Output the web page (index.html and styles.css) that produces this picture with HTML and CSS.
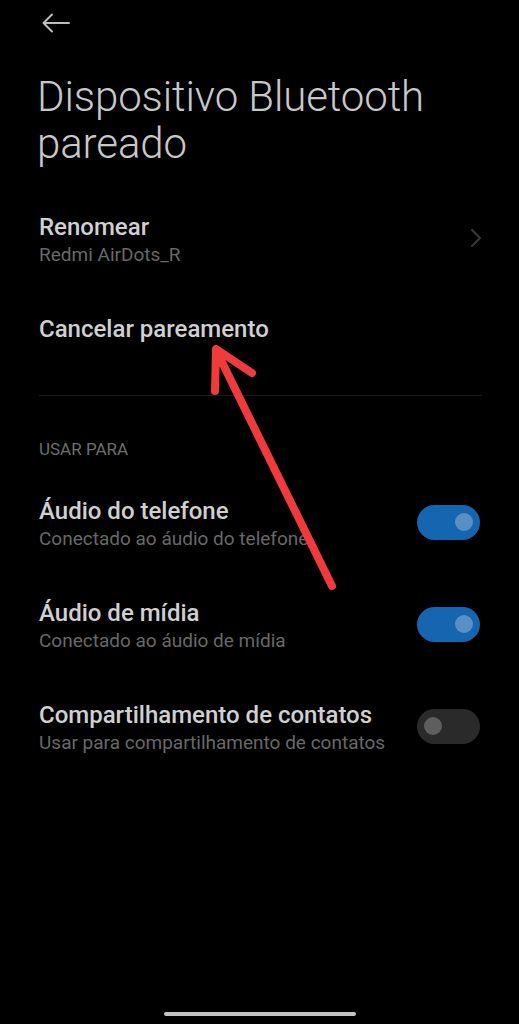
FILE: index.html
```html
<!DOCTYPE html>
<html lang="pt-BR">
<head>
    <meta charset="UTF-8">
    <meta name="viewport" content="width=device-width, initial-scale=1.0">
    <title>Dispositivo Bluetooth pareado</title>
    <link rel="stylesheet" href="styles.css">
</head>
<body>
    <div class="screen">
        <div class="topbar">
            <svg class="back" width="30" height="22" viewBox="0 0 30 22">
                <path d="M28 11H3M11 2.5L2.5 11L11 19.5" fill="none" stroke="#bdbdbd" stroke-width="2" stroke-linecap="round" stroke-linejoin="round"/>
            </svg>
        </div>

        <h1 class="title">Dispositivo Bluetooth pareado</h1>

        <div class="item item-link">
            <div class="item-text">
                <div class="item-title">Renomear</div>
                <div class="item-sub">Redmi AirDots_R</div>
            </div>
            <svg class="chevron" width="12" height="20" viewBox="0 0 12 20">
                <path d="M2 2L10 10L2 18" fill="none" stroke="#3a3a3a" stroke-width="2" stroke-linecap="round" stroke-linejoin="round"/>
            </svg>
        </div>

        <div class="item item-single">
            <div class="item-title">Cancelar pareamento</div>
        </div>

        <div class="divider"></div>

        <div class="section-label">USAR PARA</div>

        <div class="item item-toggle">
            <div class="item-text">
                <div class="item-title">Áudio do telefone</div>
                <div class="item-sub">Conectado ao áudio do telefone</div>
            </div>
            <div class="switch on"><span class="knob"></span></div>
        </div>

        <div class="item item-toggle">
            <div class="item-text">
                <div class="item-title">Áudio de mídia</div>
                <div class="item-sub">Conectado ao áudio de mídia</div>
            </div>
            <div class="switch on"><span class="knob"></span></div>
        </div>

        <div class="item item-toggle">
            <div class="item-text">
                <div class="item-title">Compartilhamento de contatos</div>
                <div class="item-sub">Usar para compartilhamento de contatos</div>
            </div>
            <div class="switch"><span class="knob"></span></div>
        </div>

        <div class="home-bar"></div>
    </div>

    <!-- red annotation arrow drawn over the screenshot -->
    <svg class="annotation" viewBox="0 0 519 1024" width="519" height="1024">
        <path d="M332 586L216 350M252 373L216 349L215 391" fill="none" stroke="#f03b3d" stroke-width="8" stroke-linecap="round" stroke-linejoin="round"/>
    </svg>
</body>
</html>
```

FILE: styles.css
```css
body {
    margin: 0;
    padding: 0;
    background-color: #000;
    font-family: Roboto, "Noto Sans", sans-serif;
    color: #cfcfcf;
}

.screen {
    position: relative;
    min-height: 1024px;
    box-sizing: border-box;
    padding: 0 39px;
    display: flex;
    flex-direction: column;
}

.topbar {
    height: 46px;
    display: flex;
    align-items: flex-start;
}

.back {
    margin-top: 12px;
    margin-left: 2px;
}

.title {
    margin: 27px 0 0 -2px;
    font-size: 42px;
    line-height: 47px;
    font-weight: 300;
    color: #c8c8c8;
    letter-spacing: -0.1px;
}

.item {
    display: flex;
    align-items: center;
    justify-content: space-between;
}

.item-title {
    font-size: 24px;
    line-height: 30px;
    font-weight: 500;
    color: #d0d0d0;
}

.item-sub {
    font-size: 19px;
    line-height: 26px;
    color: #686868;
}

.item-link {
    padding: 14px 0;
    margin-top: 31px;
}

.chevron {
    margin-right: -2px;
    margin-top: -4px;
}

.item-single {
    padding: 32px 0 51px;
}

.divider {
    height: 1px;
    background-color: #1a1a1a;
    margin-right: -2px;
}

.section-label {
    margin-top: 43px;
    font-size: 17px;
    line-height: 20px;
    color: #6e6e6e;
}

.item-toggle {
    padding: 22px 0 24px;
}

.section-label + .item-toggle {
    margin-top: 15px;
}

.switch {
    width: 63px;
    height: 35px;
    border-radius: 18px;
    background-color: #2a2a2a;
    display: flex;
    align-items: center;
    padding: 0 7px;
    box-sizing: border-box;
    margin-top: -4px;
    flex-shrink: 0;
}

.switch.on {
    background-color: #1565b0;
    justify-content: flex-end;
}

.knob {
    width: 18px;
    height: 18px;
    border-radius: 50%;
    background-color: #5e5e5e;
}

.switch.on .knob {
    background-color: #5a8fc2;
}

.home-bar {
    margin-top: auto;
    margin-bottom: 8px;
    align-self: center;
    width: 192px;
    height: 4px;
    border-radius: 2px;
    background-color: #c2c2c2;
}

.annotation {
    position: absolute;
    top: 0;
    left: 0;
    pointer-events: none;
}
```
